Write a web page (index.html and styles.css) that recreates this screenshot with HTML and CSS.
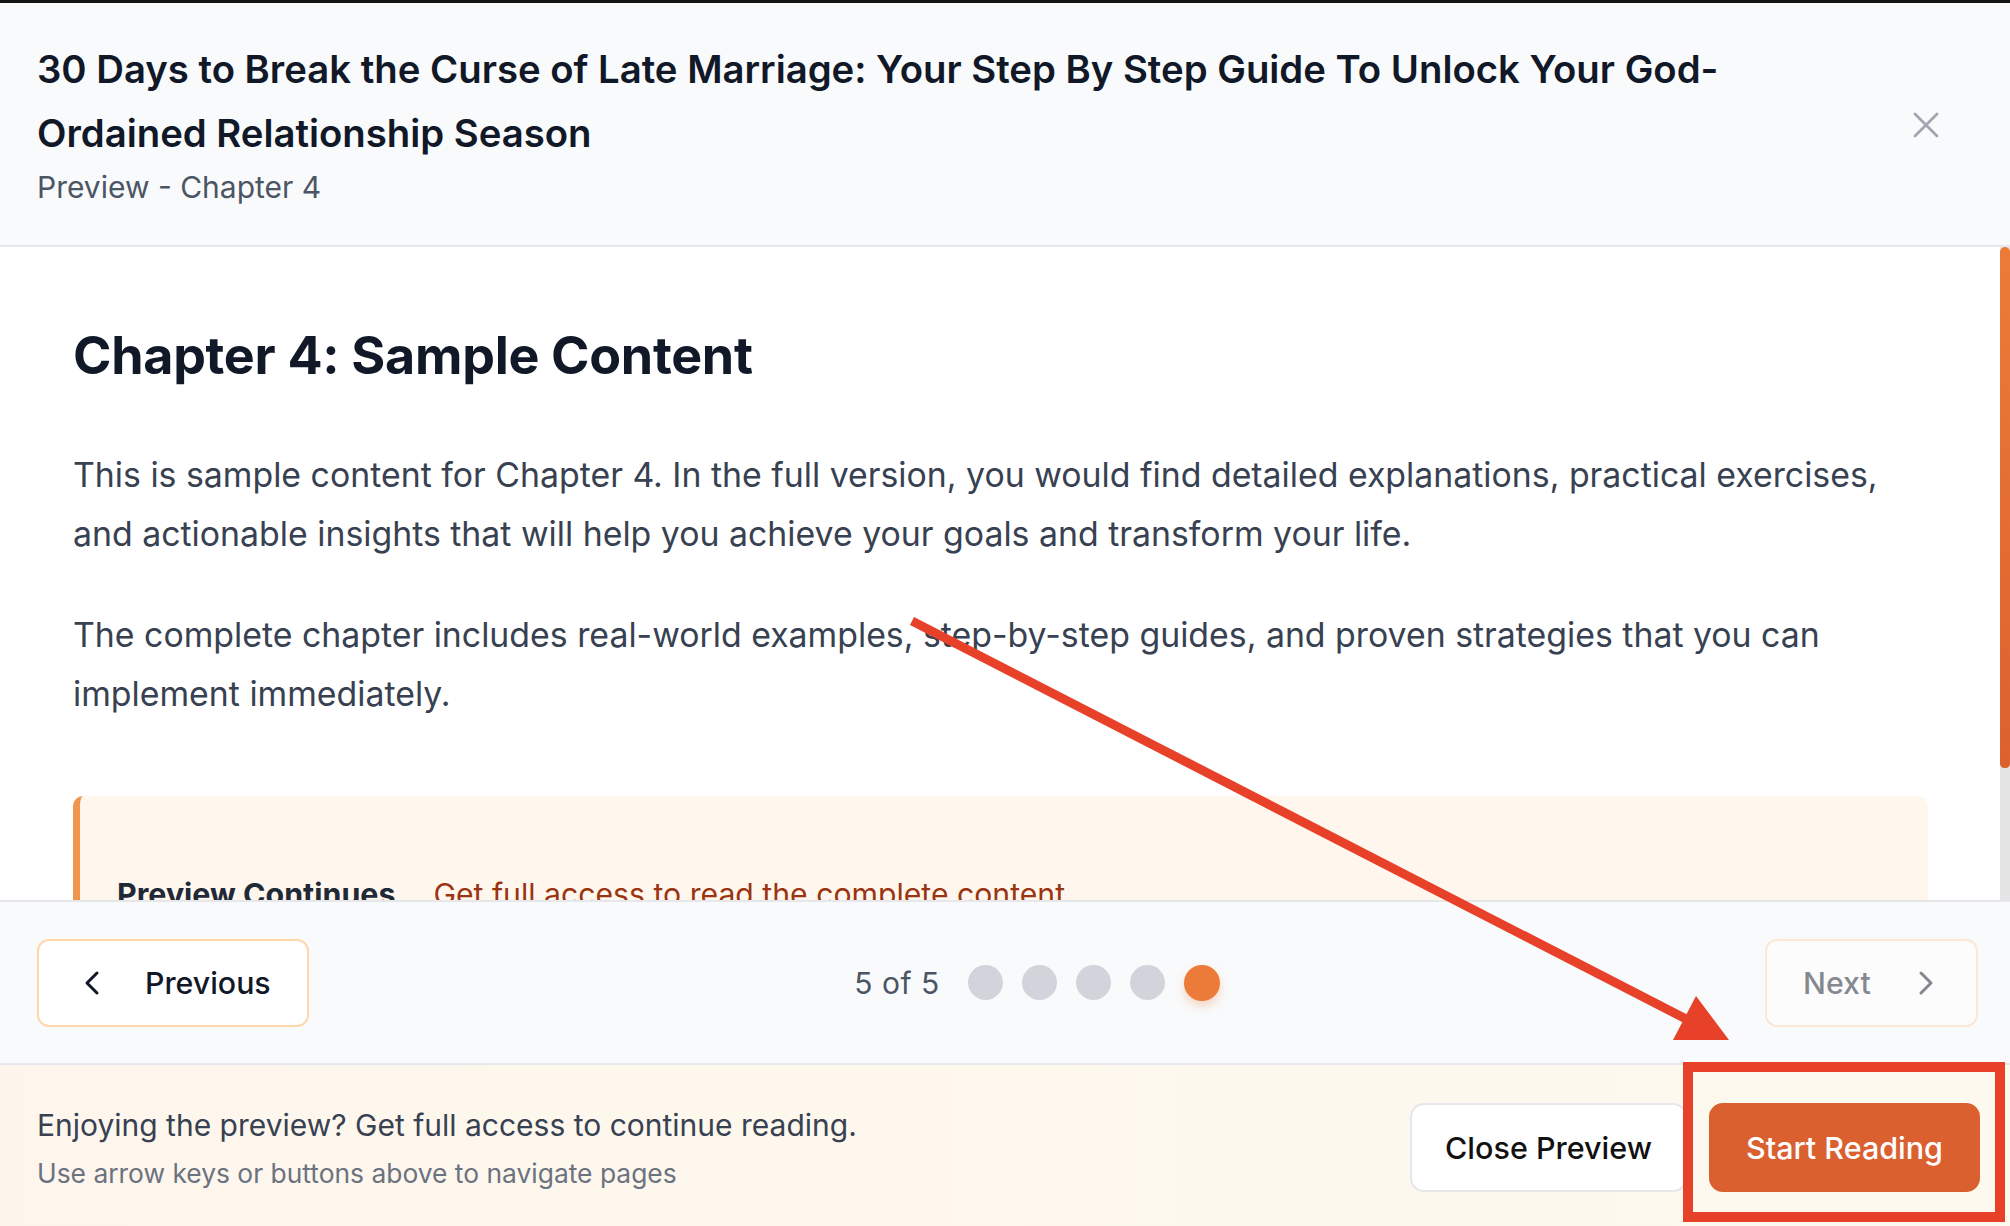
FILE: index.html
```html
<!DOCTYPE html>
<html lang="en">
<head>
<meta charset="utf-8">
<title>Preview - Chapter 4</title>
<link rel="stylesheet" href="styles.css">
</head>
<body>
<div class="topstrip"></div>
<div class="modal">
  <header class="modal-header">
    <div class="titles">
      <h1 class="book-title">30 Days to Break the Curse of Late Marriage: Your Step By Step Guide To Unlock Your God-Ordained Relationship Season</h1>
      <p class="subtitle">Preview - Chapter 4</p>
    </div>
    <button class="close-btn" aria-label="Close">
      <svg viewBox="0 0 24 24" width="44" height="44" fill="none" stroke="currentColor" stroke-width="1.5" stroke-linecap="round"><path d="M18 6 6 18M6 6l12 12"/></svg>
    </button>
  </header>
  <div class="modal-body">
    <div class="content">
      <h2 class="chapter-title">Chapter 4: Sample Content</h2>
      <p class="para">This is sample content for Chapter 4. In the full version, you would find detailed explanations, practical exercises, and actionable insights that will help you achieve your goals and transform your life.</p>
      <p class="para para-2">The complete chapter includes real-world examples, step-by-step guides, and proven strategies that you can implement immediately.</p>
      <div class="callout">
        <h3 class="callout-title">Preview Continues</h3>
        <p class="callout-text">Get full access to read the complete content</p>
      </div>
    </div>
    <div class="scrollbar"><div class="thumb"></div></div>
  </div>
  <nav class="pager">
    <button class="nav-btn prev">
      <svg viewBox="0 0 24 24" width="40" height="40" fill="none" stroke="currentColor" stroke-width="1.8" stroke-linecap="round" stroke-linejoin="round"><path d="m15 18-6-6 6-6"/></svg>
      <span>Previous</span>
    </button>
    <div class="progress">
      <span class="count">5 of 5</span>
      <div class="dots">
        <span class="dot"></span><span class="dot"></span><span class="dot"></span><span class="dot"></span><span class="dot active"></span>
      </div>
    </div>
    <button class="nav-btn next" disabled>
      <span>Next</span>
      <svg viewBox="0 0 24 24" width="40" height="40" fill="none" stroke="currentColor" stroke-width="1.8" stroke-linecap="round" stroke-linejoin="round"><path d="m9 18 6-6-6-6"/></svg>
    </button>
  </nav>
  <footer class="cta">
    <div class="cta-text">
      <p class="cta-main">Enjoying the preview? Get full access to continue reading.</p>
      <p class="cta-hint">Use arrow keys or buttons above to navigate pages</p>
    </div>
    <div class="cta-actions">
      <button class="btn btn-outline">Close Preview</button>
      <button class="btn btn-primary">Start Reading</button>
    </div>
  </footer>
</div>
<svg class="annotation" viewBox="0 0 2010 1226" width="2010" height="1226">
  <line x1="912" y1="621" x2="1688" y2="1020" stroke="#e8412a" stroke-width="9"/>
  <polygon points="1696,996 1673,1040 1729,1040" fill="#e8412a"/>
</svg>
<div class="annotation-box"></div>
</body>
</html>
```
FILE: styles.css
```css
* { box-sizing: border-box; }
html, body {
  margin: 0;
  padding: 0;
  width: 2010px;
  height: 1226px;
  overflow: hidden;
  background: #ffffff;
  font-family: Inter, "Noto Sans", "Liberation Sans", sans-serif;
}
button { font-family: inherit; cursor: pointer; }
p, h1, h2, h3 { margin: 0; }

.topstrip { height: 3px; background: #141414; }

.modal { width: 2010px; display: flex; flex-direction: column; }

.modal-header {
  height: 244px;
  display: flex;
  align-items: center;
  padding: 0 62px 4px 37px;
  background: #f9fafb;
  border-bottom: 2px solid #e5e7eb;
}
.titles { flex: 1; max-width: 1770px; }
.book-title {
  font-size: 38.3px;
  font-weight: 600;
  line-height: 64px;
  color: #111827;
}
.subtitle {
  margin-top: 2px;
  font-size: 30px;
  line-height: 40px;
  color: #4b5563;
}
.close-btn {
  margin-left: auto;
  margin-top: 6px;
  width: 44px;
  height: 44px;
  padding: 0;
  border: 0;
  background: transparent;
  color: #a0a6b0;
  display: flex;
}

.modal-body {
  height: 653px;
  display: flex;
  background: #ffffff;
}
.content {
  flex: 1;
  overflow: hidden;
  padding: 79px 72px 0 73px;
}
.chapter-title {
  font-size: 52px;
  font-weight: 700;
  line-height: 60px;
  color: #111827;
  letter-spacing: -0.3px;
}
.para {
  margin-top: 59px;
  font-size: 33.85px;
  line-height: 59px;
  color: #374151;
}
.para-2 { margin-top: 42px; }
.callout {
  margin-top: 73px;
  display: flex;
  gap: 38px;
  align-items: baseline;
  padding: 78px 40px 40px 37px;
  background: #fff7ed;
  border-left: 7px solid #f0954e;
  border-radius: 10px;
}
.callout-title {
  font-size: 30.4px;
  font-weight: 700;
  line-height: 40px;
  color: #1f2937;
}
.callout-text {
  font-size: 30.2px;
  line-height: 40px;
  color: #9a3412;
}
.scrollbar {
  width: 10px;
  background: #e5e5e5;
}
.thumb {
  height: 521px;
  background: linear-gradient(#ec7b37, #dc612f);
  border-radius: 6px 6px 5px 5px;
}

.pager {
  height: 165px;
  display: flex;
  align-items: center;
  justify-content: space-between;
  padding: 0 32px 0 37px;
  background: #f9fafb;
  border-top: 2px solid #e5e7eb;
  border-bottom: 2px solid #e5e7eb;
}
.nav-btn {
  height: 88px;
  display: flex;
  align-items: center;
  background: #ffffff;
  border: 2px solid #fed7aa;
  border-radius: 12px;
  font-size: 30.3px;
  font-weight: 500;
  color: #111827;
  white-space: nowrap;
}
.nav-btn svg { flex: none; }
.prev { width: 272px; padding: 0 0 0 33px; gap: 33px; }
.next { width: 213px; padding: 0 0 0 36px; gap: 35px; opacity: 0.5; cursor: default; }
.progress { display: flex; align-items: center; gap: 28px; }
.count { font-size: 30px; letter-spacing: 0.5px; color: #4b5563; }
.dots { display: flex; align-items: center; gap: 19px; }
.dot {
  width: 35px;
  height: 35px;
  border-radius: 50%;
  background: #d1d5db;
}
.dot.active {
  width: 36px;
  height: 36px;
  background: #ec7a38;
  box-shadow: 0 5px 10px rgba(236, 122, 56, 0.28);
}

.cta {
  height: 161px;
  display: flex;
  align-items: center;
  justify-content: space-between;
  padding: 4px 30px 0 37px;
  background: linear-gradient(to right, #fef6ec, #fdf9ee);
}
.cta-main {
  font-size: 30px;
  line-height: 40px;
  color: #374151;
}
.cta-hint {
  margin-top: 11px;
  font-size: 26.4px;
  line-height: 34px;
  color: #6b7280;
}
.cta-actions { display: flex; gap: 22px; }
.btn {
  height: 89px;
  padding: 0;
  border-radius: 14px;
  font-size: 30.5px;
  font-weight: 500;
  white-space: nowrap;
  text-align: center;
}
.btn-outline {
  width: 277px;
  background: #ffffff;
  border: 2px solid #e5e7eb;
  color: #111111;
}
.btn-primary {
  width: 271px;
  background: #db602f;
  border: 2px solid #db602f;
  color: #ffffff;
}

.annotation {
  position: absolute;
  left: 0;
  top: 0;
  pointer-events: none;
}
.annotation-box {
  position: absolute;
  left: 1683px;
  top: 1062px;
  width: 322px;
  height: 160px;
  border: 10px solid #e8412a;
  pointer-events: none;
}
```
